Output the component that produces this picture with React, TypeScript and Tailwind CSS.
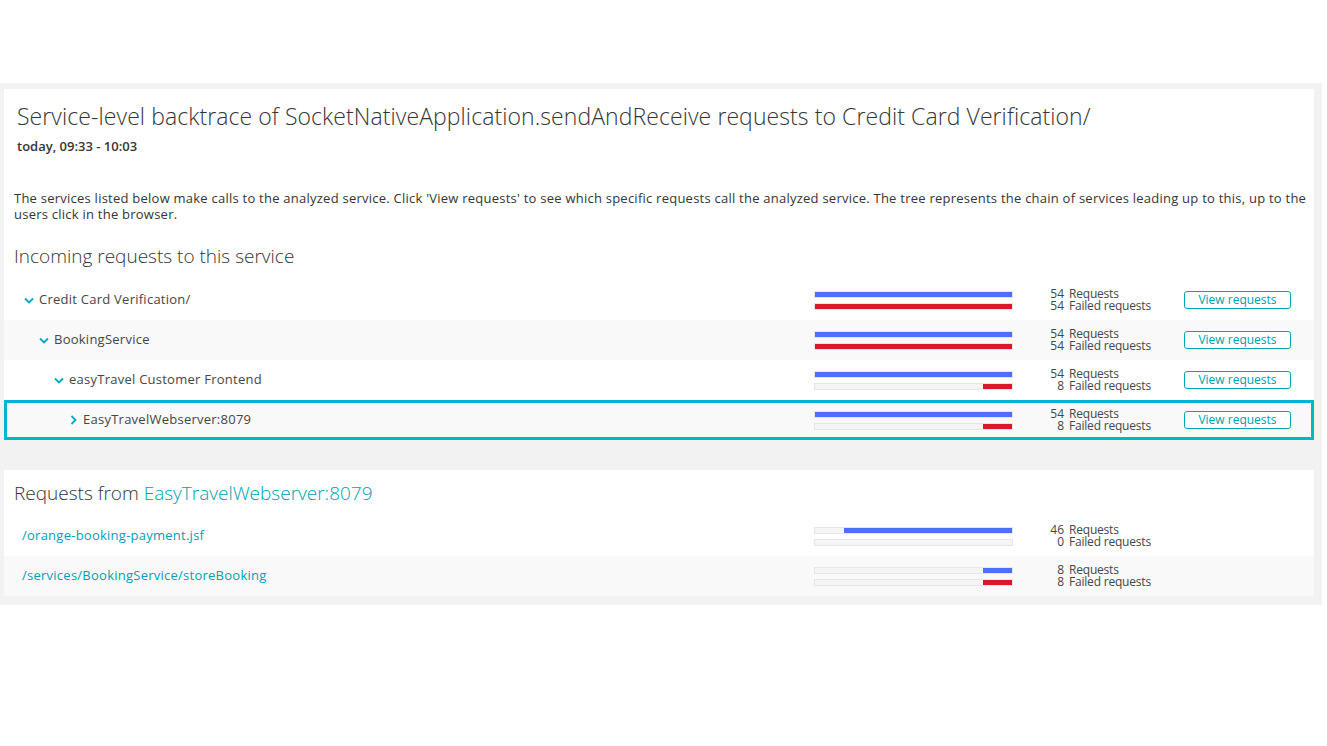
import React from "react";

function Chevron({ open }: { open: boolean }) {
  return open ? (
    <svg width="10" height="7" viewBox="0 0 10 7" className="shrink-0">
      <path d="M1 1.5 L5 5.5 L9 1.5" fill="none" stroke="#00a9c2" strokeWidth="1.8" />
    </svg>
  ) : (
    <svg width="7" height="10" viewBox="0 0 7 10" className="shrink-0">
      <path d="M1.5 1 L5.5 5 L1.5 9" fill="none" stroke="#00a9c2" strokeWidth="1.8" />
    </svg>
  );
}

function Bar({ value, max, color }: { value: number; max: number; color: string }) {
  const pct = (value / max) * 100;
  return (
    <div className="h-[7px] w-full border border-[#e6e6e6] bg-[#f5f5f5] flex justify-end">
      <div className="h-full" style={{ width: `${pct}%`, backgroundColor: color }} />
    </div>
  );
}

function Stats({ req, failed, max }: { req: number; failed: number; max: number }) {
  return (
    <>
      <div className="w-[199px] flex flex-col gap-[5px] shrink-0">
        <Bar value={req} max={max} color="#4c6fff" />
        <Bar value={failed} max={max} color="#dc172a" />
      </div>
      <div className="w-[51px] shrink-0 text-right text-[12px] leading-[12px]">
        <div>{req}</div>
        <div>{failed}</div>
      </div>
      <div className="w-[120px] shrink-0 pl-[5px] text-[12px] leading-[12px] whitespace-nowrap tracking-[-0.2px]">
        <div>Requests</div>
        <div>Failed requests</div>
      </div>
    </>
  );
}

type Row = { name: string; level: number; open: boolean; req: number; failed: number };

const rows: Row[] = [
  { name: "Credit Card Verification/", level: 0, open: true, req: 54, failed: 54 },
  { name: "BookingService", level: 1, open: true, req: 54, failed: 54 },
  { name: "easyTravel Customer Frontend", level: 2, open: true, req: 54, failed: 8 },
  { name: "EasyTravelWebserver:8079", level: 3, open: false, req: 54, failed: 8 },
];

export default function App() {
  return (
    <div
      className="w-[1327px] h-[746px] bg-white text-[#454646]"
      style={{ fontFamily: "'Open Sans', 'Noto Sans', sans-serif" }}
    >
      <div className="h-[83px]" />
      <div className="w-[1322px] bg-[#f2f2f2] pl-[4px] pr-[8px] pt-[6px] pb-[9px] flex flex-col gap-[30px]">
        {/* Card 1 */}
        <div className="bg-white">
          <div className="pl-[10px] pr-[4px] pt-[13px]">
            <h1 className="text-[23px] font-light leading-[28px] text-[#353535] pl-[3px] tracking-[0.08px]">
              Service-level backtrace of SocketNativeApplication.sendAndReceive requests to Credit Card Verification/
            </h1>
            <div className="text-[13px] font-semibold leading-[16px] mt-[8px] pl-[3px] text-[#353535]">
              today, 09:33 - 10:03
            </div>
            <p className="text-[13px] leading-[16px] mt-[36px] text-[#353535] tracking-[0.24px]">
              The services listed below make calls to the analyzed service. Click 'View requests' to see which specific
              requests call the analyzed service. The tree represents the chain of services leading up to this, up to the
              users click in the browser.
            </p>
            <h2 className="text-[19px] font-light leading-[24px] mt-[22px] text-[#353535]">
              Incoming requests to this service
            </h2>
          </div>
          <div className="mt-[12px]">
            {rows.map((r, i) => {
              const hl = r.level === 3;
              return (
                <div
                  key={r.name}
                  className={`h-[40px] flex items-center ${
                    hl
                      ? "border-[3px] border-[#00b5cc] bg-[#f9f9f9]"
                      : i % 2 === 1
                      ? "bg-[#f9f9f9]"
                      : "bg-white"
                  }`}
                >
                  <div
                    className={`flex-1 flex items-center gap-[5px] text-[13px] tracking-[0.25px] ${hl ? "-ml-[3px]" : ""}`}
                    style={{ paddingLeft: 20 + r.level * 15 + (r.open ? 0 : 1) }}
                  >
                    <Chevron open={r.open} />
                    <span className={r.open ? "" : "ml-[1px]"}>{r.name}</span>
                  </div>
                  <Stats req={r.req} failed={r.failed} max={54} />
                  <button className="w-[107px] h-[18px] shrink-0 border border-[#00a1b2] rounded-[3px] text-[12px] leading-[16px] text-[#00a1b2] bg-white">
                    View requests
                  </button>
                  <div className={hl ? "w-[20px] shrink-0" : "w-[23px] shrink-0"} />
                </div>
              );
            })}
          </div>
        </div>

        {/* Card 2 */}
        <div className="bg-white">
          <h2 className="px-[10px] pt-[11px] text-[19px] font-light leading-[24px] text-[#353535]">
            Requests from <span className="text-[#00a1b2]">EasyTravelWebserver:8079</span>
          </h2>
          <div className="mt-[11px]">
            {[
              { name: "/orange-booking-payment.jsf", req: 46, failed: 0 },
              { name: "/services/BookingService/storeBooking", req: 8, failed: 8 },
            ].map((r, i) => (
              <div key={r.name} className={`h-[40px] flex items-center ${i % 2 === 1 ? "bg-[#f9f9f9]" : "bg-white"}`}>
                <div className="flex-1 pl-[18px] text-[13px] text-[#00a1b2] tracking-[0.25px]">{r.name}</div>
                <Stats req={r.req} failed={r.failed} max={54} />
                <div className="w-[130px] shrink-0" />
              </div>
            ))}
          </div>
        </div>
      </div>
    </div>
  );
}
